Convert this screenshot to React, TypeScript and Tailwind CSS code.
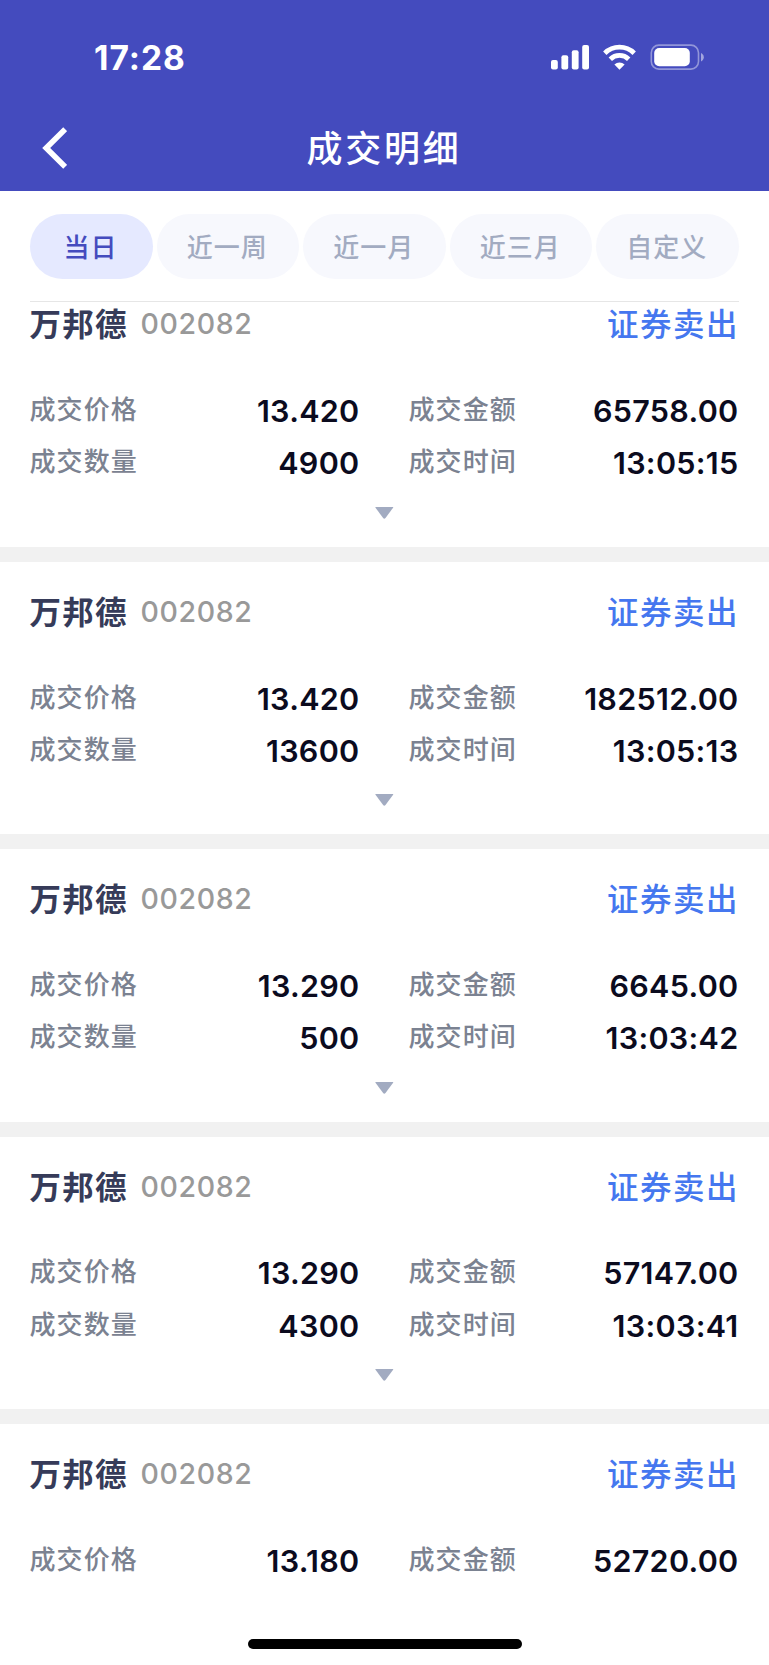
import { useState } from 'react';

type Deal = {
  name: string;
  code: string;
  side: string;
  price: string;
  amount: string;
  quantity?: string;
  time?: string;
};

const RANGES = ['当日', '近一周', '近一月', '近三月', '自定义'];

const DEALS: Deal[] = [
  { name: '万邦德', code: '002082', side: '证券卖出', price: '13.420', amount: '65758.00', quantity: '4900', time: '13:05:15' },
  { name: '万邦德', code: '002082', side: '证券卖出', price: '13.420', amount: '182512.00', quantity: '13600', time: '13:05:13' },
  { name: '万邦德', code: '002082', side: '证券卖出', price: '13.290', amount: '6645.00', quantity: '500', time: '13:03:42' },
  { name: '万邦德', code: '002082', side: '证券卖出', price: '13.290', amount: '57147.00', quantity: '4300', time: '13:03:41' },
  { name: '万邦德', code: '002082', side: '证券卖出', price: '13.180', amount: '52720.00' },
];

function StatusIcons() {
  return (
    <svg width="156" height="28" viewBox="0 0 156 28" fill="none">
      {/* signal */}
      <rect x="1" y="16" width="6.8" height="9.5" rx="2" fill="white" />
      <rect x="11.4" y="11.3" width="6.8" height="14.2" rx="2" fill="white" />
      <rect x="21.8" y="6.2" width="6.8" height="19.3" rx="2" fill="white" />
      <rect x="32.2" y="1" width="6.8" height="24.5" rx="2" fill="white" />
      {/* wifi */}
      <path d="M54.8 9.2a21 21 0 0 1 29.4 0" stroke="white" strokeWidth="4.8" />
      <path d="M60.3 15.2a13.2 13.2 0 0 1 18.4 0" stroke="white" strokeWidth="4.8" />
      <path d="M69.5 25.7l-5.1-5.1a7.4 7.4 0 0 1 10.2 0z" fill="white" />
      {/* battery */}
      <rect x="101.3" y="1.1" width="47.2" height="24" rx="7.6" stroke="white" strokeOpacity="0.42" strokeWidth="1.6" />
      <rect x="104.2" y="4" width="35.6" height="18.2" rx="5" fill="white" />
      <path d="M151 9v8.4c1.7-.7 2.800-2.300 2.800-4.200s-1.100-3.500-2.800-4.200z" fill="white" fillOpacity="0.5" />
    </svg>
  );
}

function Field({ label, value }: { label: string; value: string }) {
  return (
    <div className="flex h-[52.2px] items-center justify-between">
      <span className="text-[26px] leading-none tracking-[1.1px] font-medium text-[#7b8291]">{label}</span>
      <span className="mt-[2.5px] text-[30.5px] leading-none tracking-[0.3px] font-semibold text-[#0b0b1e]">{value}</span>
    </div>
  );
}

function DealCard({ deal }: { deal: Deal }) {
  return (
    <div className="h-[287.4px] shrink-0 border-b-[15.4px] border-[#f1f1f1] pt-[30.5px] pr-[30px] pl-[29.5px]">
      <div className="flex h-10 items-center justify-between">
        <div className="flex items-center">
          <span className="text-[31.5px] leading-none tracking-[1.2px] font-bold text-[#363b59]">{deal.name}</span>
          <span className="-mt-px ml-[13px] text-[28.5px] leading-none tracking-[0.6px] font-medium text-[#999999]">{deal.code}</span>
        </div>
        <span className="text-[31.5px] leading-none tracking-[1.5px] font-medium text-[#4577ef]">{deal.side}</span>
      </div>
      <div className="mt-[39px] grid grid-cols-[330px_330px] gap-x-[49px]">
        <Field label="成交价格" value={deal.price} />
        <Field label="成交金额" value={deal.amount} />
        {deal.quantity && <Field label="成交数量" value={deal.quantity} />}
        {deal.time && <Field label="成交时间" value={deal.time} />}
      </div>
      <svg className="mx-auto mt-[18.5px]" width="19" height="12" viewBox="0 0 19 12">
        <path d="M.8 0h17q.8 0 .3.700l-7.600 10.300q-1.200 1.300-2.400 0L.5.700Q0 0 .8 0z" fill="#a2abc1" />
      </svg>
    </div>
  );
}

export default function App() {
  const [range, setRange] = useState(RANGES[0]);

  return (
    <div className="flex h-[1665px] w-[769px] flex-col overflow-hidden bg-white font-['Inter','Noto_Sans_CJK_SC',sans-serif]">
      <header className="h-[191px] shrink-0 bg-[#444bbe] text-white">
        <div className="flex h-[104px] items-center justify-between pt-[11px] pr-[63px] pl-[94px]">
          <span className="mt-[3px] text-[33.5px] leading-none tracking-[1px] font-bold">17:28</span>
          <StatusIcons />
        </div>
        <div className="grid h-[87px] grid-cols-[1fr_auto_1fr] items-center">
          <button className="ml-[42px] w-[25px]">
            <svg width="25" height="42" viewBox="0 0 25 42" fill="none">
              <path d="M23.2 2.2L4.2 21l19 18.8" stroke="white" strokeWidth="5.6" />
            </svg>
          </button>
          <h1 className="mt-[3px] pr-px text-[36px] leading-none tracking-[2.7px] font-medium">成交明细</h1>
        </div>
      </header>

      <nav className="mr-[30.5px] ml-[29.5px] flex h-[111px] shrink-0 gap-1 border-b border-[#e6e6e6] pt-[23px]">
        {RANGES.map((item) => (
          <button
            key={item}
            onClick={() => setRange(item)}
            className={`h-[65px] rounded-full pt-0.5 pr-px text-[26px] leading-none tracking-[1px] font-medium ${
              item === range ? 'w-[123px] bg-[#e5e9ff] text-[#444bbe]' : 'flex-1 bg-[#f7f8fd] text-[#a2abc1]'
            }`}
          >
            {item}
          </button>
        ))}
      </nav>

      <main className="h-[1286px] shrink-0 overflow-hidden">
        <div className="-mt-[27.4px] flex flex-col">
          {DEALS.map((deal, index) => (
            <DealCard key={index} deal={deal} />
          ))}
        </div>
      </main>

      <div className="mx-auto mt-[51px] h-2.5 w-[274px] shrink-0 rounded-full bg-black" />
    </div>
  );
}
